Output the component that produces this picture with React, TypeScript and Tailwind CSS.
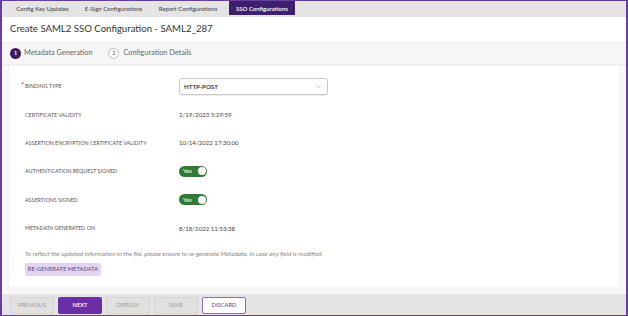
import { ChevronDown } from 'lucide-react';

const tabs = [
  { label: 'Config Key Updates', w: 'w-[75px]' },
  { label: 'E-Sign Configurations', w: 'w-[67px]' },
  { label: 'Report Configurations', w: 'w-[82px]' },
  { label: 'SSO Configurations', w: 'w-[66px]', active: true },
];

function Toggle() {
  return (
    <div className="flex h-[11px] w-[28px] items-center justify-between rounded-full bg-[#2e7d32] pl-[4px] pr-[1.5px]">
      <span className="text-[6px] leading-none text-white">Yes</span>
      <span className="h-[8px] w-[8px] rounded-full bg-white" />
    </div>
  );
}

type Row = { label: string; required?: boolean; value: React.ReactNode };

const rows: Row[] = [
  {
    label: 'Binding Type',
    required: true,
    value: (
      <div className="flex h-[17px] w-[149px] items-center justify-between rounded-[3px] border border-[#c8c8c8] bg-white pl-[4px] pr-[4px] shadow-[0_1px_1px_rgba(0,0,0,0.08)]">
        <span className="text-[6.2px] font-semibold text-[#222]">HTTP-POST</span>
        <ChevronDown size={9} strokeWidth={1.3} className="text-[#888]" />
      </div>
    ),
  },
  { label: 'Certificate Validity', value: '2/19/2023 5:29:59' },
  { label: 'Assertion Encryption Certificate Validity', value: '10/14/2022 17:30:00' },
  { label: 'Authentication Request Signed', value: <Toggle /> },
  { label: 'Assertions Signed', value: <Toggle /> },
  { label: 'Metadata Generated On', value: '8/18/2022 11:53:38' },
];

export default function App() {
  return (
    <div
      className="flex h-[316px] w-[628px] flex-col overflow-hidden border border-[#6a3ea1] border-l-2 border-r-2 bg-[#f7f7f7]"
      style={{ fontFamily: 'Lato, "Open Sans", sans-serif' }}
    >
      {/* tabs */}
      <div className="flex h-[16px] shrink-0 items-start bg-[#e4e4e4] pl-[3px]">
        {tabs.map((t) => (
          <div
            key={t.label}
            className={`flex h-[14px] items-center justify-center whitespace-nowrap text-[6px] font-semibold ${t.w} ${
              t.active ? 'bg-[#3e1f6b] text-white' : 'text-[#555]'
            }`}
          >
            {t.label}
          </div>
        ))}
      </div>

      {/* title */}
      <div className="flex h-[25px] shrink-0 items-center bg-white pl-[8px] text-[9.6px] text-[#333]">
        Create SAML2 SSO Configuration - SAML2_287
      </div>

      {/* stepper */}
      <div className="flex h-[23px] shrink-0 items-center border-y border-[#ececec] bg-[#f6f6f6] pl-[8px] text-[7.3px] text-[#666]">
        <span className="flex h-[11px] w-[11px] items-center justify-center rounded-full bg-[#3b1a5e] text-[5.5px] font-bold text-white">
          1
        </span>
        <span className="ml-[3px]">Metadata Generation</span>
        <span className="ml-[16px] flex h-[11px] w-[11px] items-center justify-center rounded-full border border-[#bbb] bg-white text-[5.5px] text-[#555]">
          2
        </span>
        <span className="ml-[4px]">Configuration Details</span>
      </div>

      {/* content */}
      <div className="flex flex-1 pl-[8px] pr-[7px] pt-[1px] pb-[8px]">
        <div className="flex flex-1 flex-col bg-white pl-[15px] pt-[6px]">
          {rows.map((r) => (
            <div key={r.label} className="flex h-[28.4px] items-center">
              <div className="relative w-[154px] text-[5.35px] uppercase text-[#555]">
                {r.required && (
                  <span className="absolute -left-[4px] -top-[2px] text-[7px] text-[#e02020]">*</span>
                )}
                {r.label}
              </div>
              <div className="text-[6.1px] text-[#444]">{r.value}</div>
            </div>
          ))}
          <div className="mt-[7px] text-[6.4px] italic text-[#888]">
            To reflect the updated information in the file, please ensure to re-generate Metadata, in case any field is modified.
          </div>
          <div className="mt-[4px] flex h-[13px] w-[76px] items-center justify-center whitespace-nowrap rounded-[2px] bg-[#e3d5f2] text-[5.8px] text-[#5b4a70]">
            RE-GENERATE METADATA
          </div>
        </div>
      </div>

      {/* footer */}
      <div className="flex h-[21px] shrink-0 items-start gap-[4px] bg-[#e4e4e4] pl-[8px] pt-[3px]">
        <button className="h-[17px] w-[44px] rounded-[2px] border border-[#d6d6d6] bg-[#e0e0e0] text-[5.8px] text-[#9a9a9a]">PREVIOUS</button>
        <button className="h-[17px] w-[44px] rounded-[2px] bg-[#6a2fa4] text-[5.8px] font-semibold text-white">NEXT</button>
        <button className="h-[17px] w-[44px] rounded-[2px] border border-[#d6d6d6] bg-[#e0e0e0] text-[5.8px] text-[#9a9a9a]">DEPLOY</button>
        <button className="h-[17px] w-[44px] rounded-[2px] border border-[#d6d6d6] bg-[#e0e0e0] text-[5.8px] text-[#9a9a9a]">SAVE</button>
        <button className="h-[17px] w-[44px] rounded-[2px] border border-[#8b6cc0] bg-white text-[5.8px] text-[#6a2fa4]">DISCARD</button>
      </div>
    </div>
  );
}
